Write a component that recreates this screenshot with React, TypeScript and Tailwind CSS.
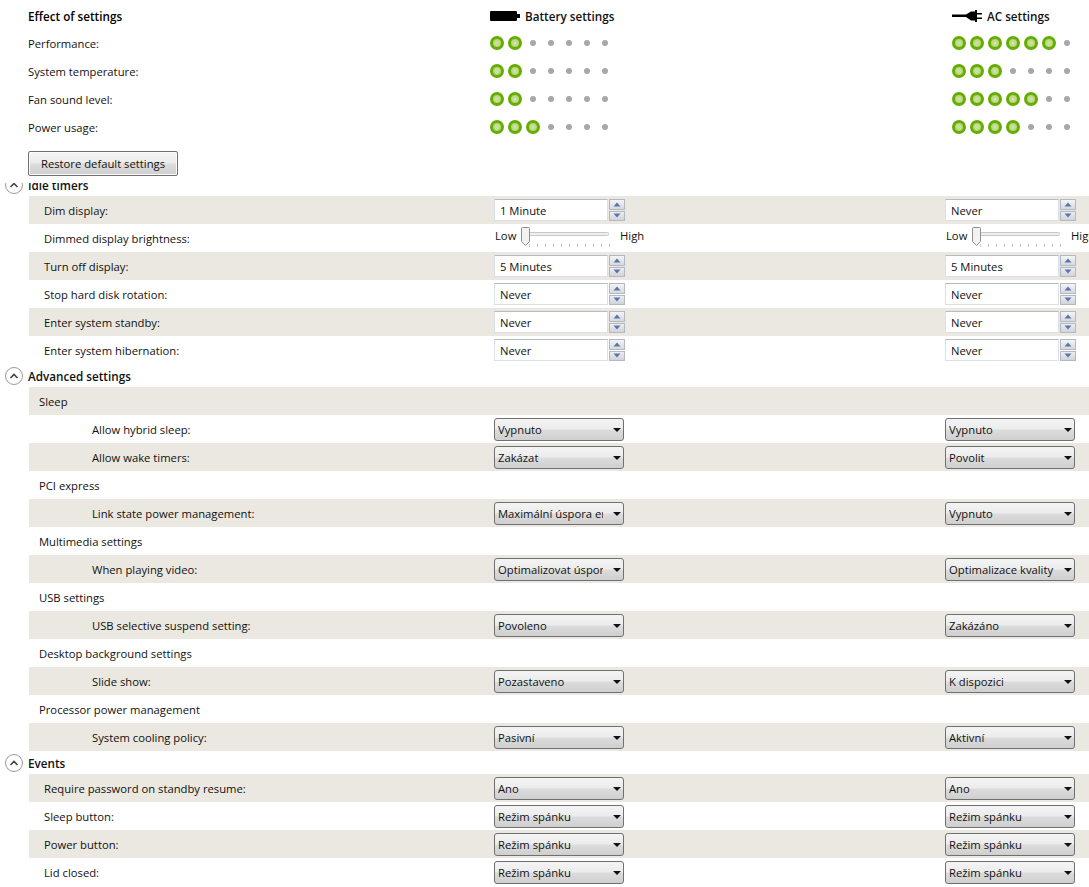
import React from "react";

const shade = "bg-[#eae8e0]";

function Dots({ on, total = 7 }: { on: number; total?: number }) {
  return (
    <div className="mb-[2px] flex items-center">
      {Array.from({ length: total }).map((_, i) => (
        <div key={i} className="flex h-[14px] w-[18px] items-center justify-center">
          {i < on ? (
            <div className="h-[14px] w-[14px] rounded-full border-[3px] border-[#65ad00] bg-[radial-gradient(circle,#d3e6a6_0%,#a9cd6c_100%)]" />
          ) : (
            <div className="h-[6px] w-[6px] rounded-full bg-[#a6a8ab]" />
          )}
        </div>
      ))}
    </div>
  );
}

function EffectRow({ label, battery, ac }: { label: string; battery: number; ac: number }) {
  return (
    <div className="flex h-7 items-center">
      <div className="w-[488px] shrink-0 pl-7">{label}</div>
      <div className="w-[462px] shrink-0"><Dots on={battery} /></div>
      <div><Dots on={ac} /></div>
    </div>
  );
}

function Spinner({ value }: { value: string }) {
  return (
    <div className="flex h-[22px] w-[131px] items-stretch">
      <div className="flex w-[114px] items-center border border-[#dbdfe6] border-t-[#b5bac3] bg-white pl-[5px] pt-[2px]">{value}</div>
      <div className="ml-[1px] flex w-4 flex-col gap-[1px]">
        <div className="flex flex-1 items-center justify-center border border-[#b4b8c2] bg-gradient-to-b from-[#f3f4f6] to-[#d6d9df]">
          <svg width="8" height="5" viewBox="0 0 8 5"><path d="M4 0.5 L7.5 4.5 H0.5 Z" fill="#5d74a8" /></svg>
        </div>
        <div className="flex flex-1 items-center justify-center border border-[#b4b8c2] bg-gradient-to-b from-[#eceef1] to-[#d0d3da]">
          <svg width="8" height="5" viewBox="0 0 8 5"><path d="M4 4.5 L7.5 0.5 H0.5 Z" fill="#5d74a8" /></svg>
        </div>
      </div>
    </div>
  );
}

function Slider() {
  return (
    <div className="flex h-7 items-start">
      <span className="ml-[1px] mt-[6px] w-[26px] shrink-0">Low</span>
      <svg width="92" height="24" viewBox="0 0 92 24" className="mt-[3px] shrink-0">
        <rect x="2.5" y="5.5" width="85" height="3" rx="1" fill="#eceef0" stroke="#c6c8cc" strokeWidth="1" />
        {Array.from({ length: 11 }).map((_, i) => (
          <rect key={i} x={8 + i * 8} y="17" width="1" height="3" fill="#c4c6ca" />
        ))}
        <path d="M0.5 1.5 Q0.5 0.5 1.5 0.5 H7.5 Q8.5 0.5 8.5 1.5 V14.5 L4.5 18.5 L0.5 14.5 Z" fill="#f2f2f2" stroke="#8f8f8f" />
      </svg>
      <span className="ml-[7px] mt-[6px] shrink-0">High</span>
    </div>
  );
}

function Combo({ value }: { value: string }) {
  return (
    <div className="relative flex h-[23px] w-[130px] items-center overflow-hidden rounded-[3px] border border-[#707070] bg-[linear-gradient(to_bottom,#f4f4f4_0%,#ececec_48%,#dcdcdc_52%,#cfcfcf_100%)] pl-[3px] pt-[2px]">
      <span className="w-[105px] overflow-hidden whitespace-nowrap leading-[14px]">{value}</span>
      <svg width="8" height="4" viewBox="0 0 8 4" className="absolute left-[118px] top-[9px]"><path d="M0 0 H8 L4 4 Z" fill="#111" /></svg>
    </div>
  );
}

function Row({ label, indent, shaded, battery, ac }: { label: string; indent: string; shaded: boolean; battery?: React.ReactNode; ac?: React.ReactNode }) {
  return (
    <div className={`ml-[29px] flex h-7 items-center ${shaded ? shade : ""}`}>
      <div className={`w-[465px] shrink-0 pt-[2px] ${indent}`}>{label}</div>
      <div className="w-[451px] shrink-0">{battery}</div>
      <div className="shrink-0">{ac}</div>
    </div>
  );
}

function SectionHeader({ title }: { title: string }) {
  return (
    <div className="flex h-[23px] items-center font-semibold text-[11.7px]">
      <div className="ml-[5px] mt-[1px] flex h-[18px] w-[18px] items-center justify-center rounded-full border border-[#9a9a9a] bg-white">
        <svg width="10" height="6" viewBox="0 0 10 6"><path d="M1.5 5 L5 1.5 L8.5 5" fill="none" stroke="#444" strokeWidth="1.6" /></svg>
      </div>
      <span className="ml-[5px] leading-[14px]">{title}</span>
    </div>
  );
}

const idle: [string, string, string][] = [
  ["Dim display:", "1 Minute", "Never"],
  ["", "", ""],
  ["Turn off display:", "5 Minutes", "5 Minutes"],
  ["Stop hard disk rotation:", "Never", "Never"],
  ["Enter system standby:", "Never", "Never"],
  ["Enter system hibernation:", "Never", "Never"],
];

const advanced: { head: string; rows: [string, string, string][] }[] = [
  { head: "Sleep", rows: [["Allow hybrid sleep:", "Vypnuto", "Vypnuto"], ["Allow wake timers:", "Zakázat", "Povolit"]] },
  { head: "PCI express", rows: [["Link state power management:", "Maximální úspora energie", "Vypnuto"]] },
  { head: "Multimedia settings", rows: [["When playing video:", "Optimalizovat úsporu energie", "Optimalizace kvality"]] },
  { head: "USB settings", rows: [["USB selective suspend setting:", "Povoleno", "Zakázáno"]] },
  { head: "Desktop background settings", rows: [["Slide show:", "Pozastaveno", "K dispozici"]] },
  { head: "Processor power management", rows: [["System cooling policy:", "Pasivní", "Aktivní"]] },
];

const events: [string, string, string][] = [
  ["Require password on standby resume:", "Ano", "Ano"],
  ["Sleep button:", "Režim spánku", "Režim spánku"],
  ["Power button:", "Režim spánku", "Režim spánku"],
  ["Lid closed:", "Režim spánku", "Režim spánku"],
];

export default function App() {
  let n = 0;
  return (
    <div className="h-[887px] w-[1089px] overflow-hidden bg-white text-[11.25px] leading-none text-[#111] [font-family:'Open_Sans','Noto_Sans',sans-serif]">
      <div className="h-[183px] pt-[2px]">
        <div className="flex h-7 items-center font-semibold text-[11.7px]">
          <div className="w-[490px] shrink-0 pl-7 pt-[2px] text-black">Effect of settings</div>
          <div className="flex w-[462px] shrink-0 items-center">
            <svg width="30" height="10" viewBox="0 0 30 10" className="shrink-0"><path d="M1 0 H26 Q27 0 27 1 V3 H30 V7 H27 V9 Q27 10 26 10 H1 Q0 10 0 9 V1 Q0 0 1 0 Z" fill="#000" /></svg>
            <span className="ml-[5px] pt-[2px]">Battery settings</span>
          </div>
          <div className="flex items-center">
            <svg width="30" height="12" viewBox="0 0 30 12" className="shrink-0"><path d="M0 4.5 H14 L19 1.5 H23 V0 H25 V3 H30 V4.5 H25 V7.5 H30 V9 H25 V12 H23 V10.5 H19 L14 7 H0 Z" fill="#000" /></svg>
            <span className="ml-[5px] pt-[2px]">AC settings</span>
          </div>
        </div>
        <EffectRow label="Performance:" battery={2} ac={6} />
        <EffectRow label="System temperature:" battery={2} ac={3} />
        <EffectRow label="Fan sound level:" battery={2} ac={5} />
        <EffectRow label="Power usage:" battery={3} ac={4} />
        <button className="ml-7 mt-[9px] block h-[25px] w-[150px] rounded-[2px] border border-[#707070] bg-[linear-gradient(to_bottom,#f6f6f6_0%,#ebebeb_48%,#dddddd_52%,#cfcfcf_100%)] shadow-[inset_0_0_0_1px_#fbfbfb]">
          Restore default settings
        </button>
      </div>
      <div className="h-[704px] overflow-hidden">
        <div className="-mt-[10px]">
          <SectionHeader title="Idle timers" />
          {idle.map((r, i) =>
            i === 1 ? (
              <div key={i} className="ml-[29px] flex h-7 items-center">
                <div className="w-[465px] shrink-0 pt-[2px] pl-[15px]">Dimmed display brightness:</div>
                <div className="w-[451px] shrink-0"><Slider /></div>
                <div className="shrink-0"><Slider /></div>
              </div>
            ) : (
              <Row key={i} label={r[0]} indent="pl-[15px]" shaded={i % 2 === 0} battery={<Spinner value={r[1]} />} ac={<Spinner value={r[2]} />} />
            )
          )}
          <SectionHeader title="Advanced settings" />
          {advanced.map((g) => (
            <React.Fragment key={g.head}>
              <Row label={g.head} indent="pl-[10px]" shaded={n++ % 2 === 0} />
              {g.rows.map((r) => (
                <Row key={r[0]} label={r[0]} indent="pl-[63px]" shaded={n++ % 2 === 0} battery={<Combo value={r[1]} />} ac={<Combo value={r[2]} />} />
              ))}
            </React.Fragment>
          ))}
          <SectionHeader title="Events" />
          {events.map((r, i) => (
            <Row key={r[0]} label={r[0]} indent="pl-[15px]" shaded={i % 2 === 0} battery={<Combo value={r[1]} />} ac={<Combo value={r[2]} />} />
          ))}
        </div>
      </div>
    </div>
  );
}
